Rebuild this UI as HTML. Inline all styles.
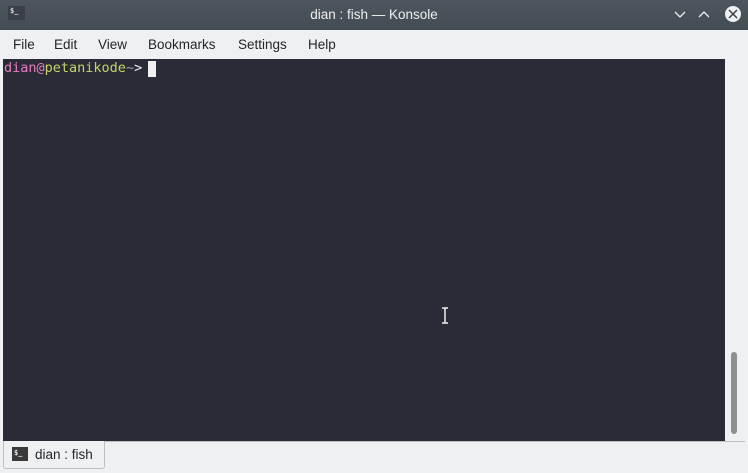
<!DOCTYPE html>
<html><head><meta charset="utf-8"><style>
*{margin:0;padding:0;box-sizing:border-box}
body{width:748px;height:473px;overflow:hidden;background:#eff0f1;font-family:"Liberation Sans",sans-serif;position:relative}
#title{position:absolute;left:0;top:0;width:748px;height:30px;background:linear-gradient(#4d565e,#444c53);color:#eff0f1;font-size:13.5px;text-align:center;line-height:29px}
#menu{position:absolute;top:30px;left:0;width:748px;height:29px;font-size:13.5px;color:#232629}
#menu span{position:absolute;top:7px}
#term{position:absolute;left:3px;top:59px;width:722px;height:382px;background:#292c36;font-family:"DejaVu Sans Mono",monospace;font-size:13.5px;line-height:17px}
#prompt{position:absolute;left:1px;top:1px;white-space:pre}
#cur{position:absolute;left:145px;top:2px;width:8px;height:16px;background:#f0f0f0}
#sb{position:absolute;left:725px;top:59px;width:23px;height:382px;background:#eff0f1}
#thumb{position:absolute;left:731px;top:352px;width:6px;height:82px;border-radius:3px;background:#8d8f91}
#tab{position:absolute;left:3px;top:441px;width:102px;height:28px;border:1px solid #bcbebf;border-top:none;border-radius:0 0 3px 3px;background:#eff0f1;font-size:13.5px;color:#232629}
#line{position:absolute;left:3px;top:441px;width:742px;height:1px;background:#bcbebf}
</style></head><body>
<div id="title">dian : fish — Konsole</div>
<div style="position:absolute;left:8px;top:6px;width:17px;height:14px;background:#3a4047;color:#ddd;font:bold 7px 'DejaVu Sans Mono',monospace;padding:1px 0 0 2px">$_</div>
<svg style="position:absolute;left:667px;top:6px" width="78" height="18">
<path d="M8 6 L13 11 L18 6" stroke="#eff0f1" stroke-width="1.3" fill="none"/>
<path d="M32 11 L37 6 L42 11" stroke="#eff0f1" stroke-width="1.3" fill="none"/>
<circle cx="66" cy="8" r="8" fill="#eff0f1"/>
<path d="M62 4 L70 12 M70 4 L62 12" stroke="#3a4047" stroke-width="1.5"/>
</svg>
<div id="menu"><span style="left:13px">File</span><span style="left:54px">Edit</span><span style="left:98px">View</span><span style="left:148px">Bookmarks</span><span style="left:238px">Settings</span><span style="left:308px">Help</span></div>
<div id="term"><div id="prompt"><span style="color:#e87cc0">dian</span><span style="color:#e87cc0">@</span><span style="color:#c5d46a">petanikode</span><span style="color:#9aa0a6">~</span><span style="color:#eeeeee">&gt;</span></div><div id="cur"></div>
<svg style="position:absolute;left:437px;top:248px" width="10" height="18"><path d="M2 1 H8 M5 1 V16 M2 16 H8" stroke="#eee" stroke-width="1.5" fill="none"/></svg>
</div>
<div id="sb"></div><div id="thumb"></div>
<div id="line"></div>
<div id="tab"><div style="position:absolute;left:8px;top:6px;width:16px;height:14px;background:#3a3a3a;color:#eee;font:bold 7px 'DejaVu Sans Mono',monospace;padding:2px 0 0 2px">$_</div><span style="position:absolute;left:31px;top:6px">dian : fish</span></div>
</body></html>
